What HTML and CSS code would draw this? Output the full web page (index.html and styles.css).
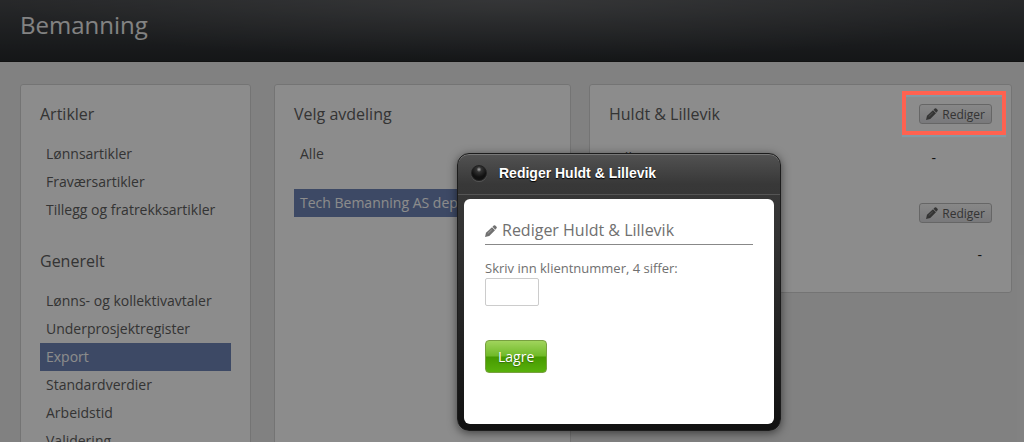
FILE: index.html
```html
<!DOCTYPE html>
<html lang="no">
<head>
  <meta charset="utf-8">
  <title>Bemanning</title>
  <meta name="viewport" content="width=device-width, initial-scale=1">
  <link rel="stylesheet" href="styles.css">
</head>
<body>
  <svg class="sprite" aria-hidden="true">
    <symbol id="pencil" viewBox="0 0 24 24">
      <path d="M0 24l2-8.500L14 4.500l6 6L8.500 22z"/>
      <path d="M15 3.500l2.500-2.500q1.500-1.200 3 0l2.500 2.500q1.200 1.500 0 3l-2.500 3z"/>
      <path class="cut" d="M5.500 17L13.500 9.500"/>
    </symbol>
  </svg>

  <header class="header">
    <h1>Bemanning</h1>
  </header>

  <main class="columns">
    <nav class="card sidebar">
      <h2>Artikler</h2>
      <ul class="menu">
        <li><a href="#">Lønnsartikler</a></li>
        <li><a href="#">Fraværsartikler</a></li>
        <li><a href="#">Tillegg og fratrekksartikler</a></li>
      </ul>
      <h2>Generelt</h2>
      <ul class="menu">
        <li><a href="#">Lønns- og kollektivavtaler</a></li>
        <li><a href="#">Underprosjektregister</a></li>
        <li><a href="#" class="active">Export</a></li>
        <li><a href="#">Standardverdier</a></li>
        <li><a href="#">Arbeidstid</a></li>
        <li><a href="#">Validering</a></li>
      </ul>
    </nav>

    <section class="card">
      <h2>Velg avdeling</h2>
      <ul class="menu departments">
        <li><a href="#">Alle</a></li>
        <li><a href="#" class="active">Tech Bemanning AS dep</a></li>
      </ul>
    </section>

    <section class="card details">
      <div class="card-head">
        <h2>Huldt &amp; Lillevik</h2>
        <div class="marked">
          <button type="button" class="edit"><svg class="icon"><use href="#pencil"/></svg>Rediger</button>
        </div>
      </div>
      <div class="field"><span>Alle</span><span class="value">-</span></div>
      <div class="card-head second">
        <button type="button" class="edit"><svg class="icon"><use href="#pencil"/></svg>Rediger</button>
      </div>
      <div class="field last"><span class="value">-</span></div>
    </section>
  </main>

  <div class="overlay"></div>

  <div class="dialog" role="dialog" aria-labelledby="dialog-title">
    <div class="dialog-bar">
      <button type="button" class="close" aria-label="Lukk"></button>
      <strong id="dialog-title">Rediger Huldt &amp; Lillevik</strong>
    </div>
    <form class="dialog-body">
      <h3><svg class="icon"><use href="#pencil"/></svg>Rediger Huldt &amp; Lillevik</h3>
      <label for="client">Skriv inn klientnummer, 4 siffer:</label>
      <input type="text" id="client" maxlength="4">
      <button type="button" class="save">Lagre</button>
    </form>
  </div>
</body>
</html>
```

FILE: styles.css
```css
* {
  box-sizing: border-box;
}

html,
body {
  height: 100%;
}

body {
  margin: 0;
  overflow: hidden;
  position: relative;
  font-family: "Open Sans", sans-serif;
  font-size: 14px;
  color: #606060;
  background: #ececec;
}

h1, h2, h3, ul {
  margin: 0;
  padding: 0;
  font-weight: 400;
}

button, input {
  font-family: inherit;
}

.sprite {
  display: none;
}

.icon {
  width: 12px;
  height: 12px;
  fill: currentColor;
}

.cut {
  fill: none;
  stroke: #c8c8c8;
  stroke-width: 1;
}

.header {
  height: 62px;
  padding: 7px 20px;
  background: radial-gradient(ellipse 50% 100% at 50% 0, rgba(255, 255, 255, 0.14), transparent), linear-gradient(#484a4d, #26292c);
  border-bottom: 1px solid #222;
}

.header h1 {
  font-size: 24px;
  line-height: 36px;
  color: #eee;
}

.columns {
  display: grid;
  grid-template-columns: 236fr 297fr 423fr;
  gap: 18px;
  padding: 22px 12px 0 20px;
}

.card {
  padding: 15px 19px;
  background: #fff;
  border: 1px solid #d4d4d4;
  border-radius: 3px;
}

.sidebar {
  margin-right: 5px;
}

.card h2 {
  font-size: 16px;
  line-height: 28px;
}

.menu {
  list-style: none;
  margin: 12px 0 23px;
}

.menu a {
  display: block;
  padding: 0 6px;
  line-height: 28px;
  color: inherit;
  text-decoration: none;
  white-space: nowrap;
}

.menu a.active {
  background: #7086b8;
  color: #fff;
}

.departments li + li {
  margin-top: 21px;
}

.details {
  align-self: start;
  padding-bottom: 23px;
}

.card-head {
  display: flex;
  justify-content: space-between;
  align-items: center;
}

.card-head.second {
  justify-content: flex-end;
  margin-top: 31px;
}

.edit {
  display: flex;
  align-items: center;
  gap: 4px;
  height: 20px;
  padding: 0 6px;
  font-size: 12px;
  color: #606060;
  background: linear-gradient(#f7f7f7, #dcdce0);
  border: 1px solid #bbb;
  border-radius: 3px;
}

.marked {
  position: relative;
}

/* red frame over the first edit button */
.marked::after {
  content: "";
  position: absolute;
  z-index: 2;
  inset: -13px -14px -11px -17px;
  border: 4px solid #ff6250;
  box-shadow: 0 2px 1px #849aa4, inset 0 2px 1px #849aa4;
  pointer-events: none;
}

.field {
  display: flex;
  justify-content: space-between;
  margin-top: 16px;
  padding: 0 56px 0 7px;
  line-height: 28px;
}

.field.last {
  justify-content: flex-end;
  margin-top: 18px;
  padding-right: 10px;
}

.value {
  color: #222;
}

.overlay {
  position: absolute;
  inset: 0;
  z-index: 1;
  background: rgba(0, 0, 0, 0.45);
}

.dialog {
  position: absolute;
  z-index: 3;
  left: 457px;
  top: 153px;
  width: 324px;
  padding: 0 6px 6px;
  background: linear-gradient(#525252, #383838 30px, #333 80px, #111);
  border: 1px solid #1c1c1c;
  border-radius: 12px;
  box-shadow: inset 0 1px 0 #777, 0 2px 10px rgba(0, 0, 0, 0.55);
}

.dialog-bar {
  display: flex;
  align-items: center;
  gap: 12px;
  height: 41px;
  margin: 0 -6px 4px;
  padding: 0 13px 3px;
  border-bottom: 1px solid #555;
  font-family: "Liberation Sans", Arial, sans-serif;
  color: #fff;
  text-shadow: 0 1px 1px #000;
}

.close {
  width: 16px;
  height: 16px;
  padding: 0;
  border: 1px solid #222;
  border-radius: 50%;
  background: radial-gradient(circle at 50% 25%, #aaa, #333 20%, #111 60%);
  box-shadow: 0 1px 0 #555;
}

.dialog-body {
  display: flex;
  flex-direction: column;
  align-items: flex-start;
  padding: 18px 21px 51px;
  background: #fff;
  border-radius: 6px;
  color: #707070;
  font-size: 13px;
}

.dialog-body h3 {
  display: flex;
  align-items: center;
  gap: 5px;
  width: 100%;
  margin-bottom: 14px;
  border-bottom: 1px solid #888;
  font-size: 16px;
  line-height: 27px;
}

.dialog-body label {
  line-height: 19px;
}

.dialog-body input {
  width: 54px;
  height: 28px;
  border: 1px solid #ccc;
  border-radius: 2px;
}

.save {
  height: 33px;
  margin-top: 34px;
  padding: 0 12px;
  font-size: 14px;
  color: #fff;
  background: linear-gradient(#a0d45c, #70ba28 48%, #469a00 52%, #58b00c);
  border: 1px solid #78a040;
  border-radius: 4px;
  text-shadow: 0 1px 1px #386c10;
}
```
